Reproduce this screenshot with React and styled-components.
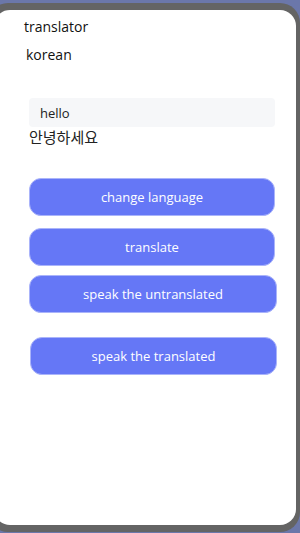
import React from "react";
import styled, { createGlobalStyle } from "styled-components";

const GlobalStyle = createGlobalStyle`
  html, body {
    margin: 0;
    padding: 0;
    background: #6b77aa;
    overflow: hidden;
  }
  * {
    box-sizing: border-box;
  }
`;

const Frame = styled.div`
  margin-top: 3px;
  margin-left: -12px;
  width: 312px;
  height: 529px;
  background: #646464;
  border-radius: 20px;
  padding: 7px 4px 7px 6px;
`;

const Screen = styled.div`
  height: 100%;
  background: #fff;
  border-radius: 16px;
  padding: 7px 0 0 30px;
  font-family: "Open Sans", "Noto Sans", "Noto Sans CJK KR", sans-serif;
  color: #111;
`;

const Title = styled.div`
  font-size: 14px;
  line-height: 20px;
`;

const Language = styled.div`
  font-size: 14px;
  line-height: 20px;
  margin: 8px 0 0 2px;
`;

const InputBox = styled.div`
  margin: 33px 0 0 5px;
  width: 246px;
  height: 29px;
  background: #f6f7f9;
  border-radius: 4px;
  padding-left: 11px;
  display: flex;
  align-items: center;
  font-size: 13px;
  color: #222;
`;

const Output = styled.div`
  margin-left: 5px;
  font-family: "Noto Sans CJK KR", "Noto Sans", sans-serif;
  font-size: 15px;
  line-height: 20px;
  color: #222;
`;

const Buttons = styled.div`
  display: flex;
  flex-direction: column;
  margin-top: 31px;
`;

const Button = styled.button`
  width: ${(p) => p.$w || 246}px;
  height: 38px;
  margin-left: ${(p) => p.$x || 5}px;
  margin-top: ${(p) => p.$top || 0}px;
  background: #6577f6;
  border: 1px solid #aab4fa;
  border-radius: 12px;
  color: #fff;
  font-family: "Open Sans", "Noto Sans", sans-serif;
  font-size: 13px;
  padding: 0;
`;

export default function App() {
  return (
    <>
      <GlobalStyle />
      <Frame>
        <Screen>
          <Title>translator</Title>
          <Language>korean</Language>
          <InputBox>hello</InputBox>
          <Output>안녕하세요</Output>
          <Buttons>
            <Button>change language</Button>
            <Button $top={12}>translate</Button>
            <Button $top={9} $w={248}>speak the untranslated</Button>
            <Button $top={24} $w={247} $x={6}>speak the translated</Button>
          </Buttons>
        </Screen>
      </Frame>
    </>
  );
}
